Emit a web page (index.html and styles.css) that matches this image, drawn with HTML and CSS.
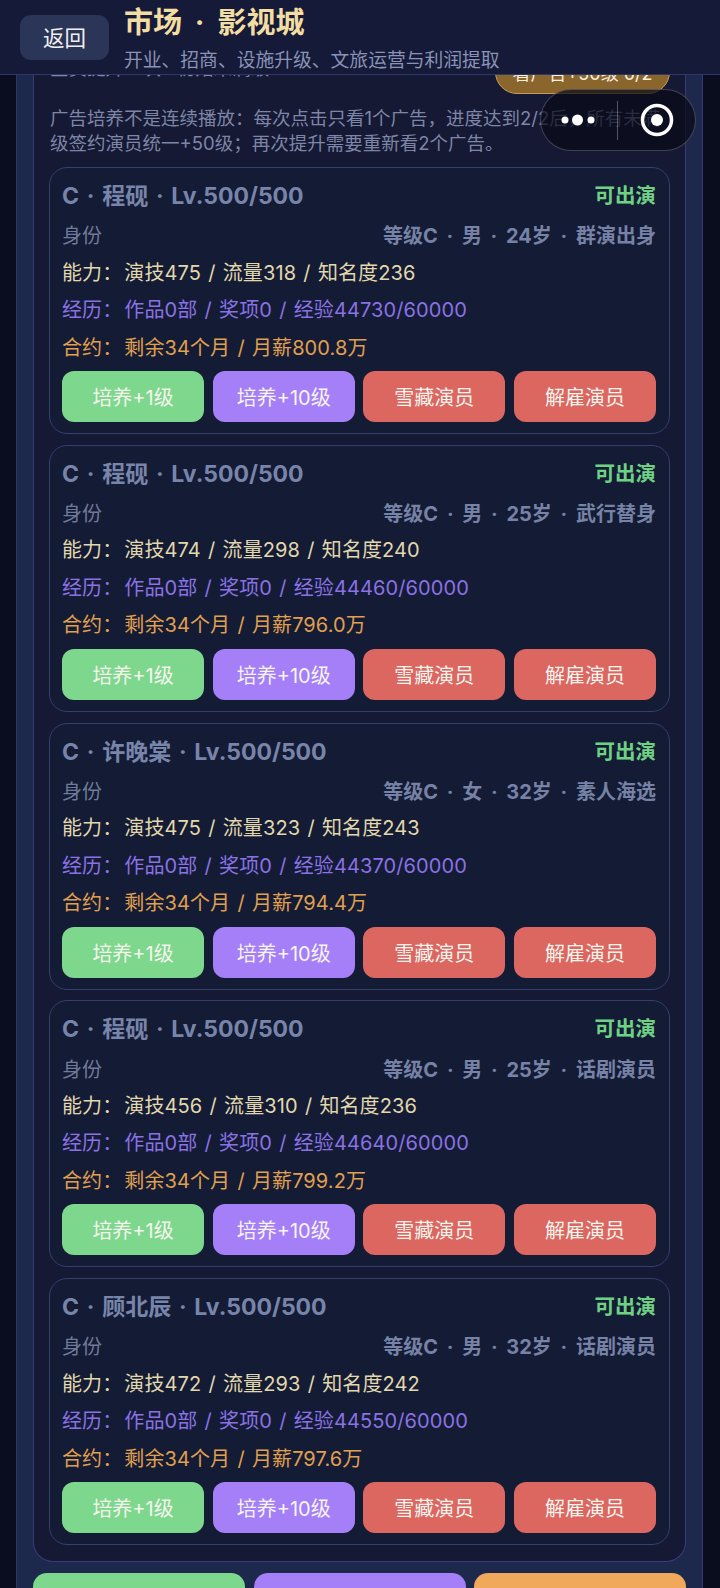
FILE: index.html
```html
<!DOCTYPE html>
<html lang="zh">
<head>
<meta charset="utf-8">
<title>市场 · 影视城</title>
<link rel="stylesheet" href="styles.css">
</head>
<body>
<header class="topbar">
  <button class="back">返回</button>
  <div class="heading">
    <div class="title">市场 · 影视城</div>
    <div class="subtitle">开业、招商、设施升级、文旅运营与利润提取</div>
  </div>
</header>
<div class="capsule">
  <svg class="capsule-icon" width="155" height="60" viewBox="0 0 155 60">
    <circle cx="24" cy="30" r="3.5" fill="#fff"/>
    <circle cx="36.5" cy="30" r="5.5" fill="#fff"/>
    <circle cx="50" cy="30" r="3.5" fill="#fff"/>
    <line x1="76.5" y1="11" x2="76.5" y2="50" stroke="#ffffff" stroke-opacity="0.3"/>
    <circle cx="116" cy="30" r="14.5" fill="none" stroke="#fff" stroke-width="3.5"/>
    <circle cx="116" cy="30" r="6" fill="#fff"/>
  </svg>
</div>
<main class="outer">
  <section class="inner">
    <div class="ad-row">
      <div class="ad-label">全员提升一次 · 初始未满级</div>
      <button class="ad-btn">看广告+50级 0/2</button>
    </div>
    <p class="note">广告培养不是连续播放：每次点击只看1个广告，进度达到2/2后，所有未满<br>级签约演员统一+50级；再次提升需要重新看2个广告。</p>
    <div class="cards">
      <article class="card">
        <div class="row-head"><span class="name">C · 程砚 · Lv.500/500</span><span class="status">可出演</span></div>
        <div class="row-id"><span class="id-label">身份</span><span class="id-value">等级C · 男 · 24岁 · 群演出身</span></div>
        <div class="stat ability"><span class="key">能力：</span>演技475 / 流量318 / 知名度236</div>
        <div class="stat history"><span class="key">经历：</span>作品0部 / 奖项0 / 经验44730/60000</div>
        <div class="stat contract"><span class="key">合约：</span>剩余34个月 / 月薪800.8万</div>
        <div class="actions"><button class="act green">培养+1级</button><button class="act purple">培养+10级</button><button class="act red">雪藏演员</button><button class="act red">解雇演员</button></div>
      </article>
      <article class="card">
        <div class="row-head"><span class="name">C · 程砚 · Lv.500/500</span><span class="status">可出演</span></div>
        <div class="row-id"><span class="id-label">身份</span><span class="id-value">等级C · 男 · 25岁 · 武行替身</span></div>
        <div class="stat ability"><span class="key">能力：</span>演技474 / 流量298 / 知名度240</div>
        <div class="stat history"><span class="key">经历：</span>作品0部 / 奖项0 / 经验44460/60000</div>
        <div class="stat contract"><span class="key">合约：</span>剩余34个月 / 月薪796.0万</div>
        <div class="actions"><button class="act green">培养+1级</button><button class="act purple">培养+10级</button><button class="act red">雪藏演员</button><button class="act red">解雇演员</button></div>
      </article>
      <article class="card">
        <div class="row-head"><span class="name">C · 许晚棠 · Lv.500/500</span><span class="status">可出演</span></div>
        <div class="row-id"><span class="id-label">身份</span><span class="id-value">等级C · 女 · 32岁 · 素人海选</span></div>
        <div class="stat ability"><span class="key">能力：</span>演技475 / 流量323 / 知名度243</div>
        <div class="stat history"><span class="key">经历：</span>作品0部 / 奖项0 / 经验44370/60000</div>
        <div class="stat contract"><span class="key">合约：</span>剩余34个月 / 月薪794.4万</div>
        <div class="actions"><button class="act green">培养+1级</button><button class="act purple">培养+10级</button><button class="act red">雪藏演员</button><button class="act red">解雇演员</button></div>
      </article>
      <article class="card">
        <div class="row-head"><span class="name">C · 程砚 · Lv.500/500</span><span class="status">可出演</span></div>
        <div class="row-id"><span class="id-label">身份</span><span class="id-value">等级C · 男 · 25岁 · 话剧演员</span></div>
        <div class="stat ability"><span class="key">能力：</span>演技456 / 流量310 / 知名度236</div>
        <div class="stat history"><span class="key">经历：</span>作品0部 / 奖项0 / 经验44640/60000</div>
        <div class="stat contract"><span class="key">合约：</span>剩余34个月 / 月薪799.2万</div>
        <div class="actions"><button class="act green">培养+1级</button><button class="act purple">培养+10级</button><button class="act red">雪藏演员</button><button class="act red">解雇演员</button></div>
      </article>
      <article class="card">
        <div class="row-head"><span class="name">C · 顾北辰 · Lv.500/500</span><span class="status">可出演</span></div>
        <div class="row-id"><span class="id-label">身份</span><span class="id-value">等级C · 男 · 32岁 · 话剧演员</span></div>
        <div class="stat ability"><span class="key">能力：</span>演技472 / 流量293 / 知名度242</div>
        <div class="stat history"><span class="key">经历：</span>作品0部 / 奖项0 / 经验44550/60000</div>
        <div class="stat contract"><span class="key">合约：</span>剩余34个月 / 月薪797.6万</div>
        <div class="actions"><button class="act green">培养+1级</button><button class="act purple">培养+10级</button><button class="act red">雪藏演员</button><button class="act red">解雇演员</button></div>
      </article>
    </div>
  </section>
  <div class="footer-actions">
    <button class="foot green"></button>
    <button class="foot purple"></button>
    <button class="foot orange"></button>
  </div>
</main>
</body>
</html>
```
FILE: styles.css
```css
* { box-sizing: border-box; }
html, body { margin: 0; height: 1588px; overflow: hidden; }
body {
  background: #090d1e;
  font-family: Inter, "Noto Sans CJK SC", sans-serif;
  color: #e2d8ae;
  position: relative;
}
button { font-family: inherit; border: 0; padding: 0; margin: 0; }

.topbar {
  position: absolute;
  top: 0; left: 0; right: 0;
  height: 75px;
  z-index: 2;
  display: flex;
  gap: 15px;
  padding-left: 20px;
  background: #151a38;
  border-bottom: 1px solid #2e3868;
}
.back {
  width: 89px;
  height: 45px;
  margin-top: 15px;
  padding-bottom: 2px;
  border-radius: 11px;
  background: #2a3557;
  color: #f0f0f0;
  font-size: 21.5px;
}
.heading { display: flex; flex-direction: column; }
.title {
  font-size: 29px;
  line-height: 36px;
  margin-top: 5px;
  font-weight: 700;
  color: #f2dda2;
  word-spacing: 6px;
}
.subtitle {
  font-size: 18.8px;
  line-height: 24px;
  margin-top: 8px;
  color: #8a93b5;
  white-space: nowrap;
}

.capsule {
  position: absolute;
  top: 89px; left: 540px;
  width: 156px; height: 62px;
  z-index: 3;
  border-radius: 31px;
  background: rgba(10, 10, 24, 0.72);
  border: 1px solid rgba(255, 255, 255, 0.22);
}
.capsule-icon { display: block; }

.outer {
  margin: 0 17px 0 16px;
  padding: 0 17px 11px;
  background: #1d294c;
  border-left: 1px solid #2d3766;
  border-right: 1px solid #38397a;
}
.inner {
  margin: 0 -1px;
  padding: 50px 15px 16px;
  background: #151933;
  border: 1px solid #3a3a78;
  border-top: 0;
  border-radius: 0 0 20px 20px;
}
.ad-row {
  display: flex;
  justify-content: space-between;
  align-items: center;
  height: 44px;
}
.ad-label {
  font-size: 18.5px;
  color: #7e86a8;
  align-self: flex-start;
  line-height: 36px;
  padding-left: 1px;
}
.ad-btn {
  width: 175px;
  height: 44px;
  border-radius: 22px;
  background: #8a652c;
  border: 1px solid #c79a57;
  color: #f6f0e0;
  font-size: 18px;
}
.note {
  margin: 12px 0 11px;
  padding-left: 1px;
  font-size: 18.5px;
  line-height: 25px;
  color: #7e86a8;
  white-space: nowrap;
}
.cards { display: flex; flex-direction: column; gap: 10.75px; }
.card {
  height: 267px;
  padding: 9px 13px 0 12px;
  background: #141b34;
  border: 1px solid #33406e;
  border-radius: 18px;
}
.row-head, .row-id { display: flex; justify-content: space-between; align-items: center; }
.row-head { height: 34px; margin-bottom: 4px; }
.row-id { height: 39.5px; font-size: 20px; }
.name { font-size: 23px; font-weight: 700; color: #7885ab; word-spacing: 2.3px; }
.status { font-size: 20.5px; font-weight: 700; color: #6fd184; }
.id-label { color: #6f7a9a; }
.id-value { font-weight: 700; color: #7682a6; word-spacing: 4px; }
.stat {
  font-size: 20px;
  line-height: 37.5px;
  height: 37.5px;
  white-space: nowrap;
  word-spacing: 1.5px;
  letter-spacing: 0.1px;
}
.key { margin-right: 2px; }
.ability { color: #e2d8ae; }
.history { color: #8a72e4; }
.contract { color: #e0a050; }
.actions {
  display: grid;
  grid-template-columns: repeat(4, 1fr);
  gap: 8.5px;
  margin-top: 4px;
}
.act {
  height: 51px;
  border-radius: 12px;
  color: #f5f5ee;
  font-size: 20px;
}
.green { background: #7dd78c; }
.purple { background: #a57ff8; }
.red { background: #dc6660; }
.orange { background: #f0a85a; }

.footer-actions {
  display: grid;
  grid-template-columns: repeat(3, 1fr);
  gap: 8.5px;
  margin: 11px -1px 0;
}
.foot { height: 50px; border-radius: 14px; }
```
